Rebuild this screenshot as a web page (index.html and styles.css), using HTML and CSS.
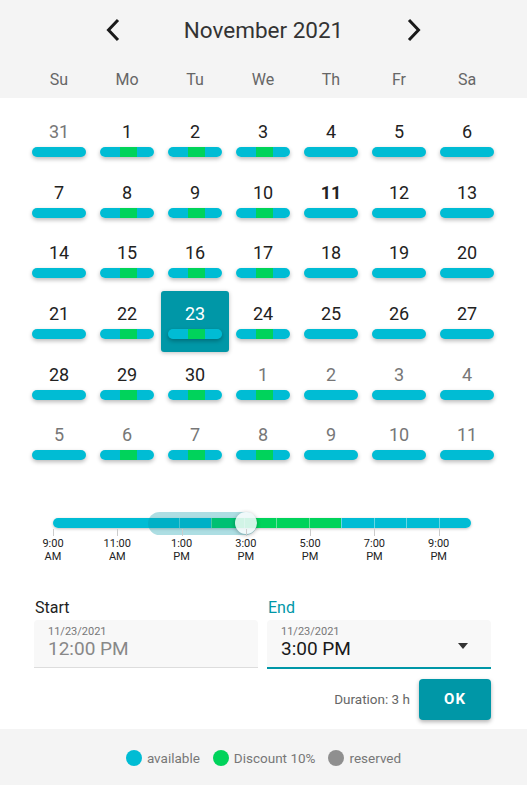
FILE: index.html
```html
<!DOCTYPE html>
<html lang="en">

<head>
     <meta charset="UTF-8">
     <meta name="viewport" content="width=device-width, initial-scale=1.0">
     <title>Booking</title>
     <link rel="stylesheet" href="styles.css">
</head>

<body>
     <div class="cal-head">
          <div class="nav">
               <button class="arrow" aria-label="Previous month">
                    <svg width="16" height="24" viewBox="0 0 16 24"><path d="M13 2 L3.5 12 L13 22" /></svg>
               </button>
               <div class="title">November 2021</div>
               <button class="arrow" aria-label="Next month">
                    <svg width="16" height="24" viewBox="0 0 16 24"><path d="M3 2 L12.5 12 L3 22" /></svg>
               </button>
          </div>
          <div class="weekdays">
               <span>Su</span><span>Mo</span><span>Tu</span><span>We</span><span>Th</span><span>Fr</span><span>Sa</span>
          </div>
     </div>

     <div class="days">
          <div class="day other"><span>31</span><i class="bar"></i></div>
          <div class="day"><span>1</span><i class="bar promo"></i></div>
          <div class="day"><span>2</span><i class="bar promo"></i></div>
          <div class="day"><span>3</span><i class="bar promo"></i></div>
          <div class="day"><span>4</span><i class="bar"></i></div>
          <div class="day"><span>5</span><i class="bar"></i></div>
          <div class="day"><span>6</span><i class="bar"></i></div>

          <div class="day"><span>7</span><i class="bar"></i></div>
          <div class="day"><span>8</span><i class="bar promo"></i></div>
          <div class="day"><span>9</span><i class="bar promo"></i></div>
          <div class="day"><span>10</span><i class="bar promo"></i></div>
          <div class="day today"><span>11</span><i class="bar"></i></div>
          <div class="day"><span>12</span><i class="bar"></i></div>
          <div class="day"><span>13</span><i class="bar"></i></div>

          <div class="day"><span>14</span><i class="bar"></i></div>
          <div class="day"><span>15</span><i class="bar promo"></i></div>
          <div class="day"><span>16</span><i class="bar promo"></i></div>
          <div class="day"><span>17</span><i class="bar promo"></i></div>
          <div class="day"><span>18</span><i class="bar"></i></div>
          <div class="day"><span>19</span><i class="bar"></i></div>
          <div class="day"><span>20</span><i class="bar"></i></div>

          <div class="day"><span>21</span><i class="bar"></i></div>
          <div class="day"><span>22</span><i class="bar promo"></i></div>
          <div class="day selected"><span>23</span><i class="bar promo"></i></div>
          <div class="day"><span>24</span><i class="bar promo"></i></div>
          <div class="day"><span>25</span><i class="bar"></i></div>
          <div class="day"><span>26</span><i class="bar"></i></div>
          <div class="day"><span>27</span><i class="bar"></i></div>

          <div class="day"><span>28</span><i class="bar"></i></div>
          <div class="day"><span>29</span><i class="bar promo"></i></div>
          <div class="day"><span>30</span><i class="bar promo"></i></div>
          <div class="day other"><span>1</span><i class="bar promo"></i></div>
          <div class="day other"><span>2</span><i class="bar"></i></div>
          <div class="day other"><span>3</span><i class="bar"></i></div>
          <div class="day other"><span>4</span><i class="bar"></i></div>

          <div class="day other"><span>5</span><i class="bar"></i></div>
          <div class="day other"><span>6</span><i class="bar promo"></i></div>
          <div class="day other"><span>7</span><i class="bar promo"></i></div>
          <div class="day other"><span>8</span><i class="bar promo"></i></div>
          <div class="day other"><span>9</span><i class="bar"></i></div>
          <div class="day other"><span>10</span><i class="bar"></i></div>
          <div class="day other"><span>11</span><i class="bar"></i></div>
     </div>

     <div class="slider">
          <div class="track">
               <div class="hours">
                    <i></i><i></i><i></i><i></i>
                    <i class="mark"></i>
                    <i class="mark promo"></i><i class="mark promo"></i><i class="mark promo"></i><i class="mark promo"></i>
                    <i class="mark"></i><i class="mark"></i><i class="mark"></i><i class="mark"></i>
               </div>
               <div class="range"></div>
               <div class="thumb"></div>
          </div>
          <div class="labels">
               <span>9:00<br>AM</span>
               <span>11:00<br>AM</span>
               <span>1:00<br>PM</span>
               <span>3:00<br>PM</span>
               <span>5:00<br>PM</span>
               <span>7:00<br>PM</span>
               <span>9:00<br>PM</span>
          </div>
     </div>

     <div class="times">
          <div class="field">
               <label>Start</label>
               <div class="box">
                    <small>11/23/2021</small>
                    <div class="value">12:00 PM</div>
               </div>
          </div>
          <div class="field active">
               <label>End</label>
               <div class="box">
                    <small>11/23/2021</small>
                    <div class="value">3:00 PM</div>
                    <span class="caret"></span>
               </div>
          </div>
     </div>

     <div class="actions">
          <span class="duration">Duration: 3 h</span>
          <button class="ok">OK</button>
     </div>

     <div class="legend">
          <span class="item"><i class="dot free"></i>available</span>
          <span class="item"><i class="dot promo"></i>Discount 10%</span>
          <span class="item"><i class="dot taken"></i>reserved</span>
     </div>
</body>

</html>
```

FILE: styles.css
```css
body {
  margin: 0;
  font-family: Roboto, "Noto Sans", sans-serif;
  color: #222;
  background: #fff;
}

/* header */

.cal-head {
  background: #f4f4f4;
  height: 98px;
}

.nav {
  height: 60px;
  display: flex;
  justify-content: center;
  align-items: center;
}

.arrow {
  width: 40px;
  height: 40px;
  border: none;
  background: none;
  padding: 0;
  display: flex;
  align-items: center;
  justify-content: center;
  cursor: pointer;
}

.arrow path {
  fill: none;
  stroke: #1a1a1a;
  stroke-width: 3;
}

.title {
  width: 261px;
  text-align: center;
  font-size: 22.5px;
  color: #333;
}

.weekdays {
  display: grid;
  grid-template-columns: repeat(7, 68px);
  padding: 0 25px;
  height: 38px;
  line-height: 40px;
  text-align: center;
  font-size: 16px;
  color: #666;
}

/* days */

.days {
  display: grid;
  grid-template-columns: repeat(7, 68px);
  grid-auto-rows: 60.67px;
  padding: 11px 25px 0;
}

.day {
  display: flex;
  flex-direction: column;
  align-items: center;
  padding-top: 12px;
  box-sizing: border-box;
  border-radius: 3px;
}

.day span {
  font-size: 18px;
  line-height: 22px;
}

.day.other span {
  color: #777;
}

.day.today span {
  font-weight: bold;
}

.day.selected {
  background: #0097a7;
  box-shadow: 0 1px 4px rgba(0, 0, 0, 0.25);
}

.day.selected span {
  color: #fff;
}

.bar {
  display: block;
  width: 54px;
  height: 10px;
  margin-top: 4px;
  border-radius: 5px;
  background: #00bcd4;
  box-shadow: 0 2px 4px rgba(0, 0, 0, 0.28);
}

.bar.promo {
  background: linear-gradient(to right, #00bcd4 0, #00bcd4 20px, #00d35b 20px, #00d35b 37px, #00bcd4 37px);
}

/* time slider */

.slider {
  padding: 45px 56px 0 53px;
}

.track {
  position: relative;
  height: 10px;
}

.hours {
  display: flex;
  height: 10px;
  border-radius: 5px;
  overflow: hidden;
  box-shadow: 0 1px 3px rgba(0, 0, 0, 0.25);
}

.hours i {
  flex: 1;
  background: #00bcd4;
}

.hours i.mark {
  border-left: 1px solid rgba(255, 255, 255, 0.4);
}

.hours i.promo {
  background: #00d35b;
}

.range {
  position: absolute;
  left: 95px;
  top: -6px;
  width: 109px;
  height: 23px;
  border-radius: 12px;
  background: rgba(0, 151, 167, 0.32);
}

.thumb {
  position: absolute;
  left: 182px;
  top: -6px;
  width: 22px;
  height: 22px;
  border-radius: 50%;
  background: rgba(255, 255, 255, 0.82);
  box-shadow: 0 1px 4px rgba(0, 0, 0, 0.3);
}

.labels {
  display: flex;
  margin-left: -32.15px;
  width: 450px;
}

.labels span {
  flex: 1;
  text-align: center;
  font-size: 11px;
  line-height: 13.5px;
  color: #222;
  padding-top: 9px;
  position: relative;
}

.labels span::before {
  content: "";
  position: absolute;
  left: 50%;
  top: 1px;
  height: 7px;
  border-left: 1px solid #ccc;
}

/* start / end */

.times {
  display: grid;
  grid-template-columns: 1fr 1fr;
  gap: 9px;
  padding: 35px 36px 0 34px;
}

.field label {
  display: block;
  font-size: 16px;
  line-height: 18px;
  margin: 0 0 3px 1px;
}

.field.active label {
  color: #0097a7;
}

.box {
  position: relative;
  height: 48px;
  padding: 6px 14px 0;
  box-sizing: border-box;
  background: #f8f8f8;
  border-radius: 4px 4px 0 0;
  border-bottom: 1px solid #ddd;
}

.field.active .box {
  border-bottom: 2px solid #0097a7;
  height: 49px;
}

.box small {
  display: block;
  font-size: 11px;
  line-height: 12px;
  color: #777;
}

.box .value {
  font-size: 19px;
  line-height: 22px;
  color: #888;
}

.field.active .value {
  color: #1a1a1a;
}

.caret {
  position: absolute;
  right: 23px;
  top: 23px;
  border-left: 5px solid transparent;
  border-right: 5px solid transparent;
  border-top: 6px solid #333;
}

.actions {
  display: flex;
  justify-content: flex-end;
  align-items: center;
  gap: 9px;
  padding: 10px 36px 0 0;
}

.duration {
  font-size: 13.5px;
  color: #666;
}

.ok {
  width: 72px;
  height: 41px;
  border: none;
  border-radius: 4px;
  background: #0097a7;
  color: #fff;
  font-family: Roboto, sans-serif;
  font-weight: bold;
  font-size: 15px;
  letter-spacing: 1px;
  box-shadow: 0 2px 4px rgba(0, 0, 0, 0.3);
  cursor: pointer;
}

/* legend */

.legend {
  margin-top: 9px;
  height: 58px;
  background: #f4f4f4;
  display: flex;
  justify-content: center;
  align-items: center;
  gap: 13px;
  font-size: 13.5px;
  color: #777;
}

.item {
  display: flex;
  align-items: center;
  gap: 5px;
}

.dot {
  width: 16px;
  height: 16px;
  border-radius: 50%;
}

.dot.free {
  background: #00bcd4;
}

.dot.promo {
  background: #00d35b;
}

.dot.taken {
  background: #8f8f8f;
}
```
